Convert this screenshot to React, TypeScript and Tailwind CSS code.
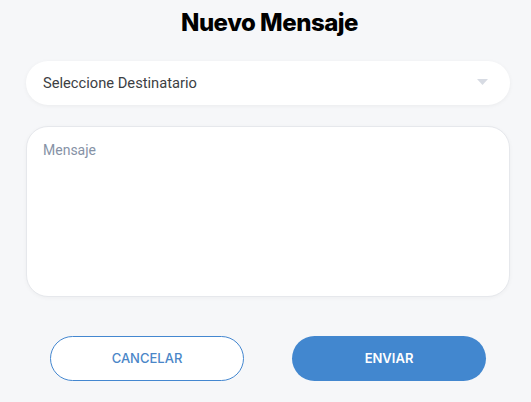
export default function App() {
  return (
    <div className="min-h-screen w-[531px] h-[402px] bg-[#f6f7f9] flex flex-col pl-[26px] pr-[21px] font-['Roboto',sans-serif]">
      <h1 className="text-center text-[24px] leading-[30px] font-extrabold tracking-[-0.5px] text-black font-['Inter',sans-serif] pt-[8px] pl-[3px]">
        Nuevo Mensaje
      </h1>

      <div className="mt-[23px] h-[44px] rounded-full bg-white shadow-[0_1px_4px_rgba(0,0,0,0.05)] flex items-center justify-between pl-[17px] pr-[22px]">
        <span className="text-[14.7px] text-[#3c4043]">Seleccione Destinatario</span>
        <svg width="11" height="6" viewBox="0 0 11 6" className="mb-[2px]">
          <path d="M0 0h11L5.5 6z" fill="#d7dbe3" />
        </svg>
      </div>

      <div className="mt-[21px] h-[171px] rounded-[22px] bg-white border border-[#e6e8ec] shadow-[0_1px_4px_rgba(0,0,0,0.04)] pt-[11px] px-[16px]">
        <span className="text-[14px] text-[#8692a6]">Mensaje</span>
      </div>

      <div className="mt-[39px] flex justify-center gap-[48px] font-['Inter',sans-serif]">
        <button className="w-[194px] h-[45px] rounded-full border border-[#4487d0] bg-white text-[13px] font-medium text-[#4a86c8]">
          CANCELAR
        </button>
        <button className="w-[194px] h-[45px] rounded-full bg-[#4287cf] text-[13px] font-semibold text-white">
          ENVIAR
        </button>
      </div>
    </div>
  );
}
